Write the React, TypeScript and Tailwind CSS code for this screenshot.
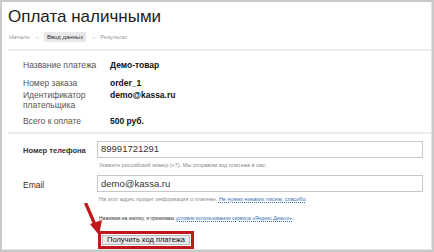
const Arrow = () => (
  <svg width="20" height="34" viewBox="0 0 20 34" className="absolute left-[-17px] top-[-31px]">
    <path d="M2 1 L12 24" stroke="#c0181c" strokeWidth="3.2" strokeLinecap="round" />
    <path d="M6 21 L15 32 L18 17 Z" fill="#c0181c" />
  </svg>
);

const InfoRow = ({ label, value }: { label: React.ReactNode; value: string }) => (
  <div className="flex items-start">
    <div className="w-[87px] text-[8.5px] text-[#555]">{label}</div>
    <div className="font-bold text-[8.5px] text-[#111]">{value}</div>
  </div>
);

const App = () => {
  return (
    <div
      className="w-[434px] h-[252px] bg-[#c9c9c9] p-[2px] overflow-hidden"
      style={{ fontFamily: '"Liberation Sans", Arial, sans-serif' }}
    >
      <div className="w-full h-full bg-white flex flex-col border-r border-b border-[#e4e4e4]">
        <h1 className="pl-[6px] pt-[5px] text-[17px] leading-[20px] text-[#222]">Оплата наличными</h1>

        <div className="flex items-center pl-[7px] mt-[5px] text-[6px] text-[#999] h-[10px]">
          <span>Начало</span>
          <span className="mx-[4px]">→</span>
          <span className="bg-[#e8e8e8] text-[#333] px-[3px] leading-[10px]">Ввод данных</span>
          <span className="mx-[4px]">→</span>
          <span>Результат</span>
        </div>

        <div className="mt-[7px] ml-[6px] h-[2px] bg-[#ececec]" />

        <div className="flex flex-col pl-[21px] pt-[9px] leading-[10px]">
          <InfoRow label="Название платежа" value="Демо-товар" />
          <div className="mt-[8px]">
            <InfoRow label="Номер заказа" value="order_1" />
          </div>
          <div className="mt-[2px]">
            <InfoRow
              label={
                <>
                  Идентификатор
                  <br />
                  плательщика
                </>
              }
              value="demo@kassa.ru"
            />
          </div>
          <div className="mt-[6px]">
            <InfoRow label="Всего к оплате" value="500 руб." />
          </div>
        </div>

        <div className="mt-[6px] ml-[6px] h-[2px] bg-[#ececec]" />

        <div className="flex flex-col pl-[21px] pt-[7px]">
          <div className="flex">
            <div className="w-[74px] pt-[4px] text-[7.5px] font-bold text-[#333]">Номер телефона</div>
            <div className="flex-1 pr-[8px]">
              <div className="h-[17px] border border-[#c8c8c8] flex items-center px-[3px] text-[9.5px] text-[#333]">
                89991721291
              </div>
              <div className="mt-[3px] pl-[2px] text-[5.5px] text-[#888]">
                Укажите российский номер (+7). Мы отправим код платежа в смс.
              </div>
            </div>
          </div>

          <div className="flex mt-[6px]">
            <div className="w-[74px] pt-[4px] text-[8.5px] text-[#333]">Email</div>
            <div className="flex-1 pr-[8px]">
              <div className="h-[17px] border border-[#c8c8c8] flex items-center px-[3px] text-[9.5px] text-[#333]">
                demo@kassa.ru
              </div>
              <div className="mt-[3px] pl-[2px] text-[5.5px] text-[#888]">
                На этот адрес придет информация о платеже.{" "}
                <span className="text-[#3a6fb5] underline decoration-dotted">Не нужно никаких писем, спасибо</span>.
              </div>
            </div>
          </div>

          <div className="ml-[76px] mt-[11px] text-[5px] text-[#333]">
            Нажимая на кнопку, я принимаю{" "}
            <span className="text-[#3a6fb5] underline decoration-dotted">
              условия использования сервиса «Яндекс.Деньги»
            </span>
            .
          </div>

          <div className="relative ml-[75px] mt-[9px] w-fit border-[3px] border-[#c0181c] p-[1px]">
            <Arrow />
            <div className="bg-[#ececec] border border-[#bbb] px-[4px] h-[10px] flex items-center text-[7.5px] text-[#111]">
              Получить код платежа
            </div>
          </div>
        </div>
      </div>
    </div>
  );
};

export default App;
